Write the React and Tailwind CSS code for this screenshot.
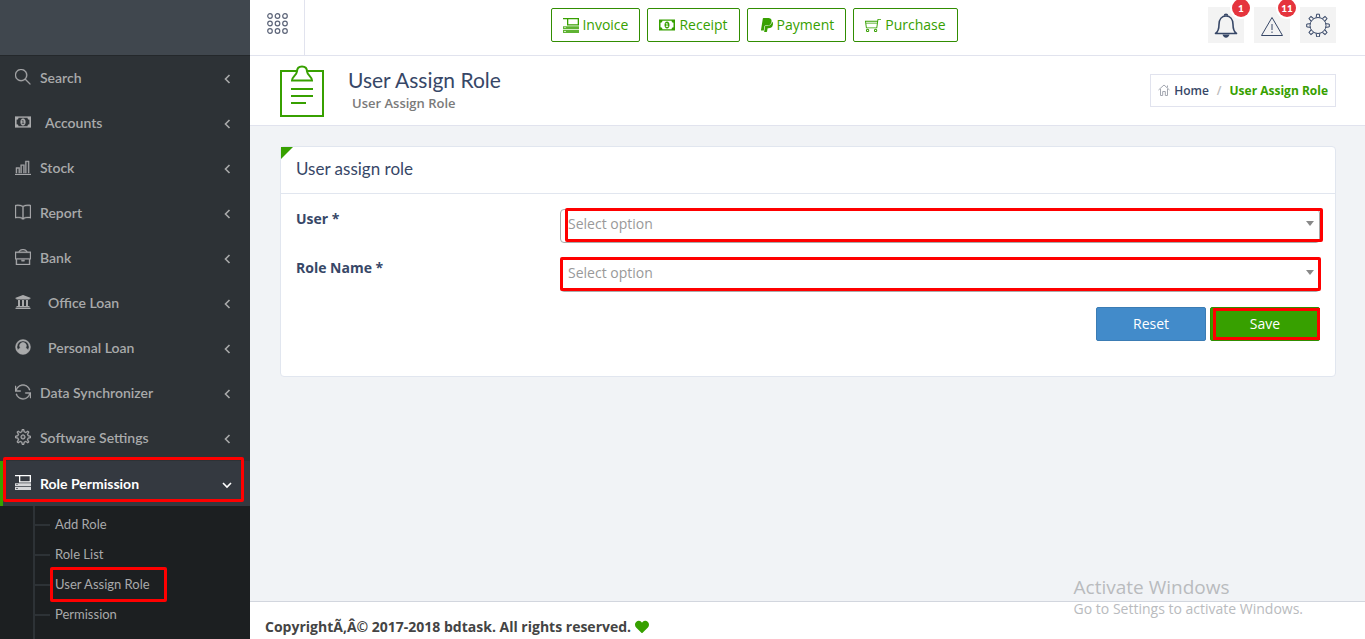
import React from "react";
import { TfiSearch, TfiBarChart, TfiBook, TfiBriefcase, TfiReload, TfiSettings, TfiShoppingCart } from "react-icons/tfi";
import { FaUniversity, FaPaypal, FaHeart } from "react-icons/fa";

function MoneyIcon({ className }) {
  return (
    <svg viewBox="0 0 32 22" className={className} fill="currentColor" aria-hidden="true">
      <path fillRule="evenodd" d="M0 0h32v22H0zM7 2.500a4 4 0 0 1-4 4v9a4 4 0 0 1 4 4h18a4 4 0 0 1 4-4v-9a4 4 0 0 1-4-4zM16 4c3 0 5 3 5 7s-2 7-5 7-5-3-5-7 2-7 5-7zm-2.500 3.500v1.500h1.500v4.500h-1.500V15h5v-1.500H17v-6z" />
    </svg>
  );
}

function RoleIcon({ className }) {
  return (
    <svg viewBox="0 0 16 16" className={className} fill="currentColor" aria-hidden="true">
      <path fillRule="evenodd" d="M0 1h16v7.500H4V2.200H0zM5.300 2.200v5h9.400v-5z" />
      <path fillRule="evenodd" opacity="0.8" d="M0 9.200h16v3H0zM0 13h16v3H0zM1.300 10.300v.8h1.400v-.8zM1.300 14.100v.8h1.400v-.8z" />
    </svg>
  );
}

function PersonIcon({ className }) {
  return (
    <svg viewBox="0 0 16 16" className={className} fill="currentColor" aria-hidden="true">
      <path fillRule="evenodd" d="M8 .5a7.500 7.500 0 1 1 0 15 7.500 7.500 0 0 1 0-15zM8 2a6 6 0 0 0-5.100 9.200c.5-1.400 1.300-2.200 2.400-2.300a3.400 3.400 0 1 1 5.400 0c1.100.1 1.900.9 2.400 2.300A6 6 0 0 0 8 2z" />
    </svg>
  );
}

const menu = [
  { label: "Search", Icon: TfiSearch, gap: "pl-[9px]" },
  { label: "Accounts", Icon: MoneyIcon, gap: "pl-3.5" },
  { label: "Stock", Icon: TfiBarChart, gap: "pl-[9px]" },
  { label: "Report", Icon: TfiBook, gap: "pl-[9px]" },
  { label: "Bank", Icon: TfiBriefcase, gap: "pl-[9px]" },
  { label: "Office Loan", Icon: FaUniversity, gap: "pl-[17px]" },
  { label: "Personal Loan", Icon: PersonIcon, gap: "pl-[17px]" },
  { label: "Data Synchronizer", Icon: TfiReload, gap: "pl-[9px]" },
  { label: "Software Settings", Icon: TfiSettings, gap: "pl-[9px]" },
];

function Chevron({ open }) {
  return (
    <svg viewBox="0 0 10 10" className="mt-0.5 size-2.5" fill="none" stroke="currentColor" strokeWidth="1.600" aria-hidden="true">
      <path d={open ? "M1 3l4 4 4-4" : "M7.500 1L3.500 5l4 4"} />
    </svg>
  );
}

function Sidebar() {
  return (
    <aside className="flex w-[250px] shrink-0 flex-col bg-[#2d3236] font-[Lato,sans-serif] text-[#a9aaab]">
      <div className="h-14 shrink-0 border-b border-[#24282b] bg-[#40474e]" />
      <nav className="flex grow flex-col">
        {menu.map(({ label, Icon, gap }) => (
          <a key={label} href="#" className="flex h-[45px] shrink-0 items-center pr-[18px] pb-px pl-[15px] text-sm font-semibold">
            <span className="shrink-0 pb-0.5"><Icon className="size-4 stroke-current stroke-[0.4]" /></span>
            <span className={gap + " grow"}>{label}</span>
            <Chevron />
          </a>
        ))}
        <a href="#" className="relative flex h-[45px] shrink-0 items-center border-l-3 border-[#37a000] bg-[#343940] pr-[18px] pl-3 text-sm font-bold text-white">
          <span className="shrink-0 pb-1"><RoleIcon className="size-4" /></span>
          <span className="grow pl-[9px]">Role Permission</span>
          <Chevron open />
          <span className="pointer-events-none absolute -top-1 right-1.5 bottom-1 left-0 rounded-xs border-3 border-[#f00]" />
        </a>
        <div className="grow bg-[#1c1f21] pl-[33px]">
          <ul className="h-full border-l-2 border-[#2d3236] pt-1 text-[13px]">
            {["Add Role", "Role List", "User Assign Role", "Permission"].map((t) => (
              <li key={t} className="relative flex h-[30px] items-center">
                <span className="h-0.5 w-[15px] bg-[#2d3236]" />
                <a href="#" className="pl-[5px]">{t}</a>
                {t === "User Assign Role" && <span className="pointer-events-none absolute -top-[3px] left-[15px] h-[35px] w-[117px] rounded-xs border-3 border-[#f00]" />}
              </li>
            ))}
          </ul>
        </div>
      </nav>
    </aside>
  );
}

const actions = [
  { label: "Invoice", Icon: RoleIcon, gap: "gap-[3px]" },
  { label: "Receipt", Icon: MoneyIcon, gap: "gap-1" },
  { label: "Payment", Icon: FaPaypal, gap: "gap-0.5" },
  { label: "Purchase", Icon: TfiShoppingCart, gap: "gap-1" },
];

function BellIcon() {
  return (
    <svg viewBox="0 0 24 26" className="h-[26px] w-6" fill="none" stroke="currentColor" strokeWidth="1.600" aria-hidden="true">
      <path d="M1.500 21.500c3-2 3.500-4.500 3.500-9C5 7 8 4 12 4s7 3 7 8.500c0 4.500.5 7 3.500 9z" strokeLinejoin="round" />
      <path d="M10.500 3.800a1.500 1.500 0 0 1 3 0" />
      <path d="M8.500 22.500h7c-.5 2-1.800 3.200-3.500 3.200s-3-1.200-3.500-3.200z" fill="currentColor" stroke="none" />
    </svg>
  );
}

function AlertIcon() {
  return (
    <svg viewBox="0 0 24 24" className="size-6" fill="none" stroke="currentColor" aria-hidden="true">
      <path d="M12 4.500L22.500 22.500h-21z" />
      <path d="M12 11v6M12 18.500v1.500" />
    </svg>
  );
}

function GearIcon() {
  return (
    <svg viewBox="0 0 24 24" className="size-6" fill="none" stroke="currentColor" aria-hidden="true">
      <circle cx="12" cy="12.500" r="8" />
      {[0, 45, 90, 135, 180, 225, 270, 315].map((a) => (
        <path key={a} d="M10.200 4.500l.4-3.300h2.800l.4 3.300" transform={`rotate(${a} 12 12.5)`} />
      ))}
    </svg>
  );
}

function Topbar() {
  return (
    <header className="flex h-14 shrink-0 border-b border-[#e1e3ee] bg-white">
      <button aria-label="Toggle menu" className="flex w-[55px] shrink-0 justify-center border-r border-[#e1e3ee] pt-[13px]">
        <svg viewBox="0 0 21 21" className="size-[21px]" fill="none" stroke="#5c6478" strokeWidth="1.200" aria-hidden="true">
          {[3, 10.5, 18].map((y) => [3, 10.5, 18].map((x) => <circle key={x + "-" + y} cx={x} cy={y} r="2.300" />))}
        </svg>
      </button>
      <div className="flex grow justify-center gap-[7px] pt-2 pr-1">
        {actions.map(({ label, Icon, gap }) => (
          <a key={label} href="#" className={gap + " flex h-[34px] items-center rounded-xs border border-[#318d01] px-[11px] text-sm text-[#37a000]"}>
            <Icon className="size-4" />
            {label}
          </a>
        ))}
      </div>
      <div className="flex gap-2.5 pt-[7px] pr-[29px] text-[#374767]">
        {[[BellIcon, "Notifications", "1"], [AlertIcon, "Alerts", "11"], [GearIcon, "Settings", null]].map(([Icon, name, n]) => (
          <button key={name} aria-label={name} className="relative flex size-9 items-center justify-center bg-[#f3f3f3]">
            <Icon />
            {n && <span className="absolute -top-2 -right-1.5 flex size-[18px] items-center justify-center rounded-full bg-[#e5343d] font-[Lato,sans-serif] text-[10px] font-black text-white ring-2 ring-white">{n}</span>}
          </button>
        ))}
      </div>
    </header>
  );
}

function PageHeader() {
  return (
    <section className="flex h-[70px] shrink-0 items-start border-b border-[#e1e3ee] bg-white px-[29px]">
      <svg viewBox="0 0 46 54" className="mt-2 h-[54px] w-[46px]" fill="none" stroke="#37a000" strokeWidth="2" aria-hidden="true">
        <path d="M18 7H2v45h42V7H28" />
        <path d="M13 16.500c0-4 4.500-5 5-9 0-3 2-5 5-5s5 2 5 5c.5 4 5 5 5 9zM12 25h22M12 32h22M12 39h15" />
      </svg>
      <div className="grow pt-[11px] pl-[23px]">
        <h1 className="font-[Lato,sans-serif] text-[21px] leading-[25px] text-[#374767]">User Assign Role</h1>
        <p className="pl-1 text-[13px] leading-[23px] font-semibold text-[#7a7a7a]">User Assign Role</p>
      </div>
      <nav className="mt-[18px] flex h-[33px] items-center border border-[#e1e3ee] px-[7px] text-xs font-semibold">
        <svg viewBox="0 0 12 12" className="mr-1 mb-0.5 size-3" fill="none" stroke="#a3a7b0" aria-hidden="true">
          <path d="M.5 6L6 1l5.500 5M2.500 5v6.500h2.200V7.500h2.600v4h2.200V5M9.500 3.500V1.500" />
        </svg>
        <a href="#" className="text-[#374767]">Home</a>
        <span className="px-2 text-[#bbb]">/</span>
        <span className="font-bold text-[#37a000]">User Assign Role</span>
      </nav>
    </section>
  );
}

function SelectRow({ id, label, mark }) {
  return (
    <div className="mb-[15px] flex items-start">
      <label htmlFor={id} className="mr-2 w-1/4 text-sm leading-5 font-bold text-[#374767]">{label} *</label>
      <div className="relative grow">
        <select id={id} className="h-[34px] w-full appearance-none rounded-sm border border-[#aaa] bg-white pr-8 pb-1 pl-[7px] text-sm text-[#999]">
          <option>Select option</option>
        </select>
        <svg viewBox="0 0 8 5" className="pointer-events-none absolute top-3 right-1.5 h-[5px] w-2 fill-[#888]" aria-hidden="true"><path d="M0 0h8L4 5z" /></svg>
        <span className={"pointer-events-none absolute rounded-xs border-3 border-[#f00] " + mark} />
      </div>
    </div>
  );
}

export default function App() {
  return (
    <div className="flex h-screen overflow-hidden bg-[#f1f3f6] font-['Open_Sans',sans-serif]">
      <Sidebar />
      <div className="flex min-w-0 grow flex-col">
        <Topbar />
        <PageHeader />
        <main className="grow pt-5 pr-[29px] pl-[30px]">
          <section className="relative rounded-sm border border-[#e1e6ef] bg-white pb-[35px]">
            <svg viewBox="0 0 12 12" className="absolute top-0 left-0 size-3 fill-[#37a000]" aria-hidden="true"><path d="M0 0h12L0 12z" /></svg>
            <h2 className="h-[47px] border-b border-[#e1e6ef] px-[15px] pt-2.5 font-[Lato,sans-serif] text-[17px] leading-6 text-[#374767]">User assign role</h2>
            <form className="px-[15px] pt-[15px]">
              <SelectRow id="user" label="User" mark="-top-px -right-[3px] bottom-px left-[5px]" />
              <SelectRow id="role" label="Role Name" mark="-top-px -right-px bottom-px left-0" />
              <div className="flex justify-end gap-1 text-sm text-white">
                <button type="reset" className="h-[34px] w-[110px] rounded-xs border border-[#3b7cb4] bg-[#428bca]">Reset</button>
                <button type="button" className="relative h-[34px] w-[110px] rounded-xs border border-[#318d01] bg-[#37a000]">
                  Save
                  <span className="pointer-events-none absolute -inset-x-px inset-y-0 ml-[3px] border-3 border-[#f00]" />
                </button>
              </div>
            </form>
          </section>
        </main>
        <footer className="relative flex h-[38px] shrink-0 items-center gap-1 border-t border-[#d2d6de] bg-white px-[15px] pt-3 text-sm font-bold text-[#444]">
          CopyrightÃ‚Â© 2017-2018 bdtask. All rights reserved.
          <FaHeart className="size-3.5 text-[#37a000]" />
          <div className="pointer-events-none absolute right-[62px] bottom-5 font-normal text-[#b9bbbe]">
            <p className="text-[19px] leading-6">Activate Windows</p>
            <p className="text-sm leading-5">Go to Settings to activate Windows.</p>
          </div>
        </footer>
      </div>
    </div>
  );
}
